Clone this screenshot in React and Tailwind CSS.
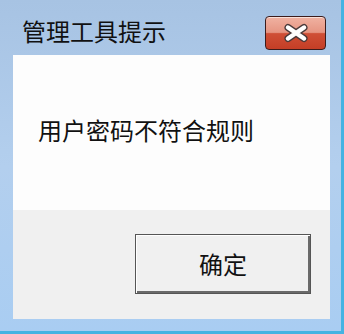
export default function App() {
  const font = { fontFamily: '"Noto Sans CJK SC", "Noto Sans", sans-serif' };
  return (
    <div
      className="w-[344px] h-[334px] flex flex-col bg-gradient-to-b from-[#a7c3e3] via-[#b3cfee] to-[#a9cdf2] border-r-[3px] border-b-[3px] border-[#45b3e2] overflow-hidden"
      style={font}
    >
      <div className="h-[55px] shrink-0 flex items-start justify-between">
        <div className="pl-[22px] pt-[17px] text-[24px] leading-[28px] text-[#111]">管理工具提示</div>
        <div className="mt-[16px] mr-[15px] w-[61px] h-[34px] rounded-[4px] border border-[#3b1c1c] bg-[linear-gradient(to_bottom,#f0b2a2_0%,#e69582_48%,#cf4f36_52%,#c43e26_100%)] flex items-center justify-center shadow-[inset_0_1px_0_rgba(255,255,255,0.6)]">
          <svg width="30" height="20" viewBox="0 0 30 20">
            <path d="M7 4.5 L23 15.5 M23 4.5 L7 15.5" stroke="#4a3a3a" strokeWidth="7" strokeLinecap="round" />
            <path d="M7 4.5 L23 15.5 M23 4.5 L7 15.5" stroke="#ffffff" strokeWidth="4.5" strokeLinecap="round" />
          </svg>
        </div>
      </div>
      <div className="flex-1 flex pl-[13px] pr-[11px]">
        <div className="flex-1 flex flex-col">
          <div className="h-[155px] bg-[#fdfdfd] pl-[25px] pt-[61px]">
            <div className="text-[24px] leading-[28px] text-[#111]">用户密码不符合规则</div>
          </div>
          <div className="h-[109px] bg-[#f0f0f0] flex justify-end pr-[19px] pt-[24px]">
            <div className="w-[176px] h-[60px] border border-[#555] bg-[#f0f0f0] shadow-[inset_1px_1px_0_#ffffff,inset_-2px_-2px_0_#6a6a6a] flex items-center justify-center text-[24px] text-[#111]">
              确定
            </div>
          </div>
        </div>
      </div>
      <div className="h-[12px] shrink-0"></div>
    </div>
  );
}
